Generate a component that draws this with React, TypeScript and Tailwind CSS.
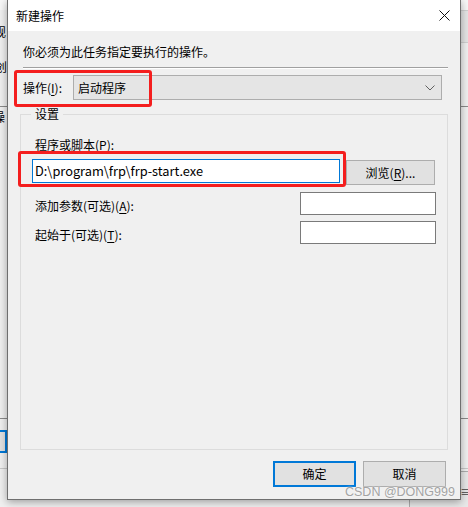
import React from 'react';

function U({ children }: { children: React.ReactNode }) {
    return <span className="underline underline-offset-[2px]">{children}</span>;
}

export default function App() {
    return (
        <div className="relative w-[468px] h-[507px] overflow-hidden bg-[#f0f0f0] text-black text-[12px] leading-[16px] font-['Noto_Sans_CJK_SC',sans-serif]">
            {/* window behind the dialog */}
            <div className="absolute left-0 top-0 w-[468px] h-[10px] bg-[#f7f7f7]" />
            <div className="absolute left-[-6px] top-[24px] text-[12px]">规</div>
            <div className="absolute left-[-5px] top-[59px] text-[12px]">创</div>
            <div className="absolute left-0 top-[106px] w-[468px] h-px bg-[#8a8a8a]" />
            <div className="absolute left-[-7px] top-[109px] text-[12px]">操</div>
            <div className="absolute left-[-10px] top-[430px] w-[17px] h-[23px] border-2 border-[#0078d7] bg-[#e1e1e1]" />
            <div className="absolute left-0 top-[468px] w-[468px] h-px bg-[#c8c8c8]" />
            <div className="absolute left-[440px] top-[10px] w-[40px] h-[33px] bg-[#e5e5e5] border border-[#d0d0d0]" />
            <div className="absolute left-0 top-[418px] w-[468px] h-px bg-[#8a8a8a]" />
            <div className="absolute left-[409px] top-[471px] w-[70px] h-[40px] bg-[#e8e8e8] border border-[#adadad]" />
            <div className="absolute left-[460px] top-[484px] text-[12px] text-[#444]">≡</div>

            {/* dialog */}
            <div className="absolute left-[7px] top-0 w-[454px] h-[500px] flex flex-col border-x border-b border-[#6f6f6f] bg-[#f0f0f0] shadow-[0_2px_8px_rgba(0,0,0,0.35)]">
                <div className="h-[31px] bg-white flex items-center justify-between pl-[8px] pr-[10px]">
                    <span>新建操作</span>
                    <svg width="11" height="11" viewBox="0 0 11 11">
                        <path d="M0.5 0.5 L10.5 10.5 M10.5 0.5 L0.5 10.5" stroke="#111" strokeWidth="1" />
                    </svg>
                </div>

                <div className="flex flex-col px-[12px]">
                    <div className="pl-[3px] mt-[13px]">你必须为此任务指定要执行的操作。</div>
                    <div className="ml-[3px] mt-[7px]">
                        <div className="h-px bg-[#a0a0a0]" />
                        <div className="h-px bg-white" />
                    </div>

                    <div className="flex items-center mt-[6px]">
                        <div className="w-[53px] pl-[3px]">
                            操作(<U>I</U>):
                        </div>
                        <div className="w-[369px] h-[25px] flex items-center justify-between pl-[4px] pr-[6px] bg-[#e5e5e5] border border-[#adadad]">
                            <span>启动程序</span>
                            <svg width="10" height="6" viewBox="0 0 10 6">
                                <path d="M0.5 0.5 L5 5 L9.5 0.5" fill="none" stroke="#606060" strokeWidth="1" />
                            </svg>
                        </div>
                    </div>

                    <fieldset className="mt-[6px] h-[344px] border border-[#dcdcdc] px-[11px]">
                        <legend className="ml-[-1px] px-[4px]">设置</legend>
                        <div className="pl-[3px] mt-[15px]">
                            程序或脚本(<U>P</U>):
                        </div>
                        <div className="flex items-start mt-[6px]">
                            <div className="w-[308px] h-[24px] flex items-center pl-[2px] text-[12.8px] bg-white border border-[#0078d7]">
                                D:\program\frp\frp-start.exe
                            </div>
                            <div className="ml-[6px] mt-[1px] w-[89px] h-[25px] flex items-center justify-center bg-[#e1e1e1] border border-[#adadad]">
                                浏览(<U>R</U>)...
                            </div>
                        </div>
                        <div className="flex items-center justify-between mt-[7px]">
                            <div className="pl-[3px] pt-[4px]">
                                添加参数(可选)(<U>A</U>):
                            </div>
                            <div className="w-[136px] h-[23px] bg-white border border-[#7a7a7a]" />
                        </div>
                        <div className="flex items-center justify-between mt-[6px]">
                            <div className="pl-[3px] pt-[4px]">
                                起始于(可选)(<U>T</U>):
                            </div>
                            <div className="w-[136px] h-[23px] bg-white border border-[#7a7a7a]" />
                        </div>
                    </fieldset>

                    <div className="flex justify-end gap-[7px] mt-[11px] pr-[2px]">
                        <div className="w-[83px] h-[26px] flex items-center justify-center bg-[#e1e1e1] border-2 border-[#0078d7]">
                            确定
                        </div>
                        <div className="w-[83px] h-[26px] flex items-center justify-center bg-[#e1e1e1] border border-[#adadad]">
                            取消
                        </div>
                    </div>
                </div>
            </div>

            {/* annotations */}
            <div className="absolute left-[14px] top-[70px] w-[138px] h-[37px] border-[3px] border-[#f41e1e] rounded-[3px]" />
            <div className="absolute left-[18px] top-[151px] w-[328px] h-[36px] border-[3px] border-[#f41e1e] rounded-[3px]" />
            <div className="absolute left-[345px] top-[484px] text-[12.5px] leading-[16px] text-[#a3a3a3] font-['Liberation_Sans',sans-serif] [text-shadow:0_0_2px_#fff]">
                CSDN @DONG999
            </div>
        </div>
    );
}
